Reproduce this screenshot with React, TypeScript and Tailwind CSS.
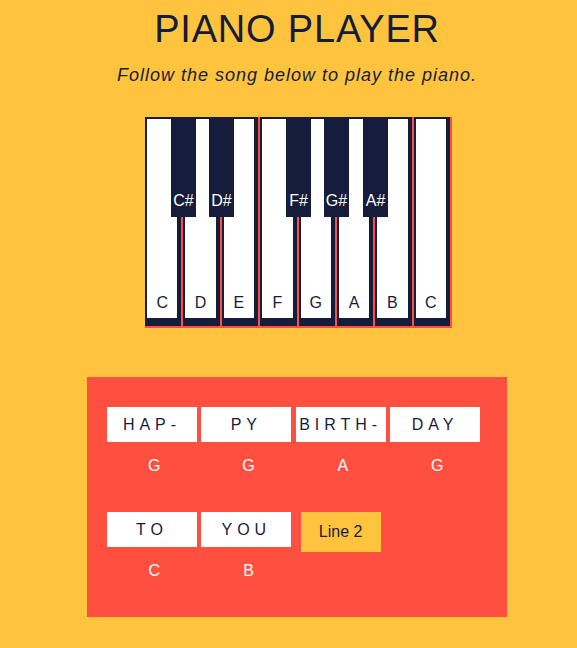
import React from "react";

const whiteKeys = ["C", "D", "E", "F", "G", "A", "B", "C"];

const blackKeys = [
  { note: "C#", pos: "left-[26px]" },
  { note: "D#", pos: "left-[64px]" },
  { note: "F#", pos: "left-[141px]" },
  { note: "G#", pos: "left-[179px]" },
  { note: "A#", pos: "left-[218px]" },
];

const song = [
  [
    { lyric: "Hap-", note: "G" },
    { lyric: "py", note: "G" },
    { lyric: "Birth-", note: "A" },
    { lyric: "day", note: "G" },
  ],
  [
    { lyric: "to", note: "C" },
    { lyric: "you", note: "B" },
  ],
];

const Piano: React.FC = () => {
  return (
    <div className="relative ml-[3px] flex h-[211px] w-[307px] bg-[#ff4f40]">
      {whiteKeys.map((key, idx) => (
        <div key={idx} className="h-full flex-1 pb-[2px] pr-[2px]">
          <div className="h-full bg-[#161c3b] pb-[8px] pl-[2px] pr-[4px] pt-[2px]">
            <div className="flex h-full items-end justify-center bg-white pb-[6px] text-[16px] leading-[18px] text-[#161c3b]">
              {key}
            </div>
          </div>
        </div>
      ))}
      {blackKeys.map((key) => (
        <div
          key={key.note}
          className={`absolute top-0 ${key.pos} flex h-[100px] w-[25px] items-end justify-center bg-[#161c3b] pb-[7px] text-[16px] leading-[18px] text-white`}
        >
          {key.note}
        </div>
      ))}
    </div>
  );
};

const App: React.FC = () => {
  return (
    <div className="min-h-screen bg-[#ffc43d] pl-[17px] font-['Liberation_Sans',Arial,sans-serif] text-[#161c3b]">
      <div className="flex flex-col items-center">
        <h1 className="mt-[7px] text-[38px] leading-[44px] tracking-[0.8px]">PIANO PLAYER</h1>
        <p className="mt-[13px] text-[18px] italic leading-[22px] tracking-[1px]">
          Follow the song below to play the piano.
        </p>
        <div className="mt-[31px]">
          <Piano />
        </div>
        <div className="mt-[49px] w-[420px] bg-[#ff4f40] pl-[20px] pt-[30px]">
          {song.map((line, li) => (
            <div key={li} className="flex items-start pb-[37px]">
              {line.map((item, idx) => (
                <div key={idx} className="flex w-[94.33px] flex-col">
                  <div className="flex h-[35px] w-[90px] items-center justify-center bg-white pt-[1px] text-[16px] uppercase tracking-[5px] text-[#161c3b]">
                    {item.lyric}
                  </div>
                  <p className="mt-[15px] text-center text-[16px] leading-[18px] text-white">
                    {item.note}
                  </p>
                </div>
              ))}
              {li === 1 && (
                <button className="ml-[5px] h-[40px] w-[80px] bg-[#ffc43d] text-[16px] text-[#161c3b]">
                  Line 2
                </button>
              )}
            </div>
          ))}
        </div>
      </div>
    </div>
  );
};

export default App;
